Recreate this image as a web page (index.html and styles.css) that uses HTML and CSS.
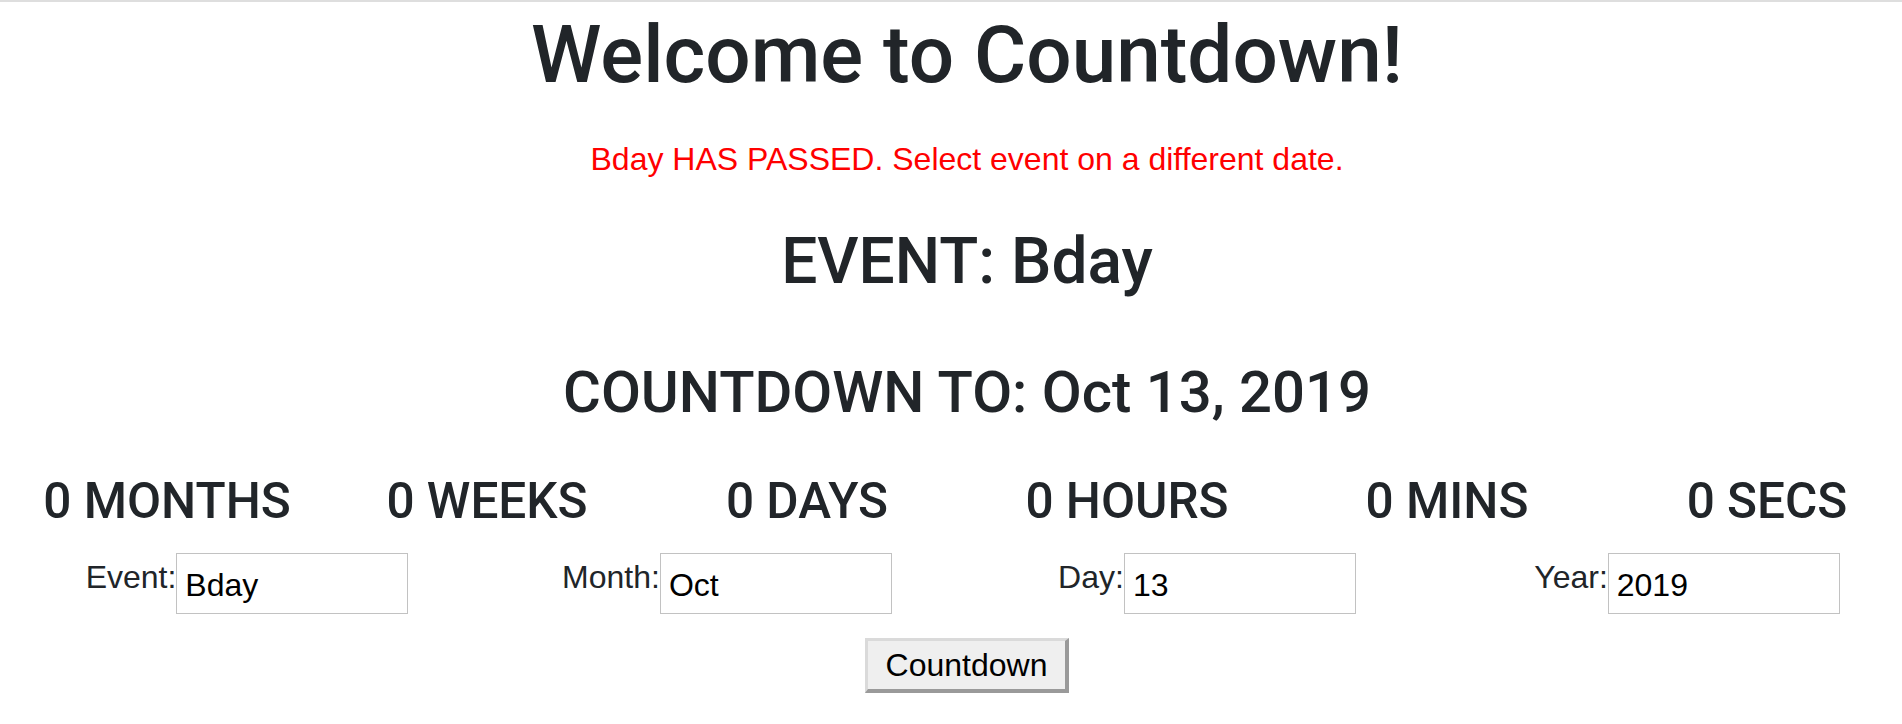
FILE: index.html
```html
<!DOCTYPE html>
<html lang="en">
<head>
<meta charset="utf-8">
<title>Countdown</title>
<link rel="stylesheet" href="styles.css">
</head>
<body>
<div class="topline"></div>
<main class="page">
  <h1 class="title">Welcome to Countdown!</h1>
  <p class="alert">Bday HAS PASSED. Select event on a different date.</p>
  <h2 class="event">EVENT: Bday</h2>
  <h3 class="target">COUNTDOWN TO: Oct 13, 2019</h3>
  <div class="clock">
    <div class="unit">0 MONTHS</div>
    <div class="unit">0 WEEKS</div>
    <div class="unit">0 DAYS</div>
    <div class="unit">0 HOURS</div>
    <div class="unit">0 MINS</div>
    <div class="unit">0 SECS</div>
  </div>
  <form class="fields">
    <div class="field"><label class="field-label" for="ev">Event:</label><input class="field-input" id="ev" type="text" value="Bday"></div>
    <div class="field"><label class="field-label" for="mo">Month:</label><input class="field-input" id="mo" type="text" value="Oct"></div>
    <div class="field"><label class="field-label" for="dy">Day:</label><input class="field-input" id="dy" type="text" value="13"></div>
    <div class="field"><label class="field-label" for="yr">Year:</label><input class="field-input" id="yr" type="text" value="2019"></div>
  </form>
  <div class="actions"><button class="go" type="button">Countdown</button></div>
</main>
</body>
</html>
```

FILE: styles.css
```css
html, body {
  margin: 0;
  padding: 0;
  background: #fff;
  overflow-x: hidden;
}
body {
  font-family: "Liberation Sans", Arial, sans-serif;
  color: #212529;
}
.topline {
  height: 2px;
  background: #dedede;
}
.page {
  width: 1920px;
  margin-left: 7px;
  text-align: center;
}
.title,
.event,
.target,
.clock {
  font-family: Roboto, "Liberation Sans", Arial, sans-serif;
  font-weight: 500;
}
.title {
  font-size: 80px;
  line-height: 96px;
  margin: 5px 0 0;
}
.alert {
  color: #ff0000;
  font-size: 32px;
  line-height: 48px;
  margin: 32px 0 0;
}
.event {
  font-size: 64px;
  line-height: 76px;
  margin: 41px 0 0;
}
.target {
  font-size: 58px;
  line-height: 68px;
  margin: 58px 0 0;
}
.clock {
  display: grid;
  grid-template-columns: repeat(6, 320px);
  margin-top: 47px;
  font-size: 49.5px;
  line-height: 56px;
}
.fields {
  display: grid;
  grid-template-columns: repeat(4, 480px);
  margin: 24px 0 0;
}
.field {
  display: flex;
  justify-content: center;
  align-items: flex-start;
}
.field-label {
  font-size: 32px;
  line-height: 48px;
}
.field-input {
  width: 232px;
  height: 61px;
  box-sizing: border-box;
  margin: 0;
  border: 1px solid #c2c2c2;
  padding: 4px 8px 0;
  font-family: "Liberation Sans", Arial, sans-serif;
  font-size: 32px;
  color: #000;
  background: #fff;
  outline: none;
}
.actions {
  margin-top: 24px;
}
.go {
  width: 204px;
  height: 55px;
  box-sizing: border-box;
  padding: 0;
  margin: 0;
  font-family: "Liberation Sans", Arial, sans-serif;
  font-size: 32px;
  line-height: 1;
  color: #000;
  background: #efefef;
  border-style: solid;
  border-width: 3px 4px 4px 3px;
  border-color: #dadada #9a9a9a #9a9a9a #dadada;
}
```
